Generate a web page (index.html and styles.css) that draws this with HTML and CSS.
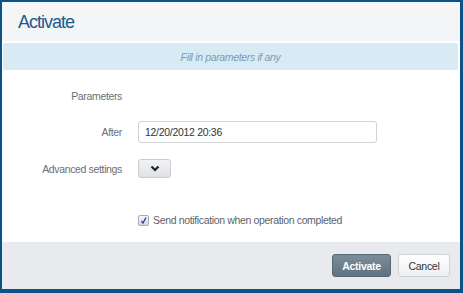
FILE: index.html
```html
<!DOCTYPE html>
<html lang="en">
<head>
    <meta charset="UTF-8">
    <title>Activate</title>
    <link rel="stylesheet" href="styles.css">
</head>
<body>

<div class="dialog">
    <div class="dialog-header">
        <h1>Activate</h1>
    </div>

    <div class="hint">Fill in parameters if any</div>

    <div class="dialog-body">
        <div class="row row-params">
            <span class="label">Parameters</span>
        </div>
        <div class="row row-after">
            <span class="label">After</span>
            <input class="field" type="text" value="12/20/2012 20:36">
        </div>
        <div class="row row-advanced">
            <span class="label">Advanced settings</span>
            <button class="toggle">
                <svg width="10" height="7" viewBox="0 0 10 7">
                    <path d="M1.5 1.5 L5 5 L8.5 1.5" fill="none" stroke="#222" stroke-width="2.2"/>
                </svg>
            </button>
        </div>
        <div class="row row-notify">
            <span class="label"></span>
            <label class="check">
                <span class="box">
                    <svg width="9" height="9" viewBox="0 0 9 9">
                        <path d="M2.5 5 L4 7 L7 1.5" fill="none" stroke="#2a47a8" stroke-width="1.4"/>
                    </svg>
                </span>
                Send notification when operation completed
            </label>
        </div>
    </div>

    <div class="dialog-footer">
        <button class="btn btn-primary">Activate</button>
        <button class="btn btn-default">Cancel</button>
    </div>
</div>

</body>
</html>
```

FILE: styles.css
```css
body {
    margin: 0;
    font-family: "Liberation Sans", Arial, sans-serif;
    background: #0b5288;
    width: 463px;
    height: 293px;
    overflow: hidden;
}

.dialog {
    margin: 2px 3px 0 2px;
    height: 287px;
    background: #ffffff;
    display: flex;
    flex-direction: column;
}

.dialog-header {
    background: #f4f5f7;
    height: 39px;
    border-bottom: 1px solid #ffffff;
    padding-left: 16px;
    display: flex;
    align-items: center;
}

.dialog-header h1 {
    margin: 2px 0 0 0;
    font-size: 18px;
    font-weight: normal;
    color: #1d5a8c;
    letter-spacing: -1px;
}

.hint {
    margin: 1px 2px 0 1px;
    height: 27px;
    background: #d8ebf5;
    border-radius: 2px;
    color: #7b9bb5;
    font-style: italic;
    font-size: 10.5px;
    letter-spacing: -0.35px;
    display: flex;
    align-items: center;
    justify-content: center;
    padding-top: 1px;
    box-sizing: border-box;
}

.dialog-body {
    flex: 1;
    padding-top: 16px;
}

.row {
    display: flex;
    align-items: center;
}

.label {
    width: 120px;
    text-align: right;
    font-size: 10.5px;
    letter-spacing: -0.35px;
    color: #6a6f75;
    flex-shrink: 0;
}

.row-params {
    height: 20px;
}

.row-after {
    margin-top: 15px;
}

.field {
    margin-left: 16px;
    width: 225px;
    height: 20px;
    padding: 0 6px;
    border: 1px solid #cfd3d7;
    border-radius: 3px;
    font-family: "Liberation Sans", Arial, sans-serif;
    font-size: 10.5px;
    letter-spacing: -0.3px;
    color: #333;
    box-sizing: content-box;
}

.row-advanced {
    margin-top: 16px;
}

.toggle {
    margin-left: 16px;
    width: 33px;
    height: 19px;
    border: 1px solid #c9ccd0;
    border-radius: 3px;
    background: linear-gradient(#f2f3f4, #dfe1e3);
    display: flex;
    align-items: center;
    justify-content: center;
    padding: 0;
}

.row-notify {
    margin-top: 36px;
}

.check {
    margin-left: 16px;
    display: flex;
    align-items: center;
    font-size: 10.5px;
    letter-spacing: -0.35px;
    color: #5d6268;
}

.box {
    width: 9px;
    height: 9px;
    border: 1px solid #a8adb3;
    border-radius: 2px;
    background: linear-gradient(#f6f6f7, #d6d9dc);
    margin-right: 4px;
    display: flex;
    align-items: center;
    justify-content: center;
}

.dialog-footer {
    margin-top: auto;
    height: 47px;
    background: #e9eaed;
    display: flex;
    align-items: center;
    justify-content: flex-end;
    padding-right: 10px;
    gap: 7px;
}

.btn {
    height: 23px;
    border-radius: 3px;
    font-family: "Liberation Sans", Arial, sans-serif;
    font-size: 10.5px;
    letter-spacing: -0.3px;
    padding: 0;
}

.btn-primary {
    width: 59px;
    background: linear-gradient(#7b8d9a, #5f7280);
    border: 1px solid #566874;
    color: #ffffff;
    font-weight: bold;
}

.btn-default {
    width: 52px;
    background: linear-gradient(#ffffff, #eeeff0);
    border: 1px solid #d0d3d6;
    color: #333;
}
```
